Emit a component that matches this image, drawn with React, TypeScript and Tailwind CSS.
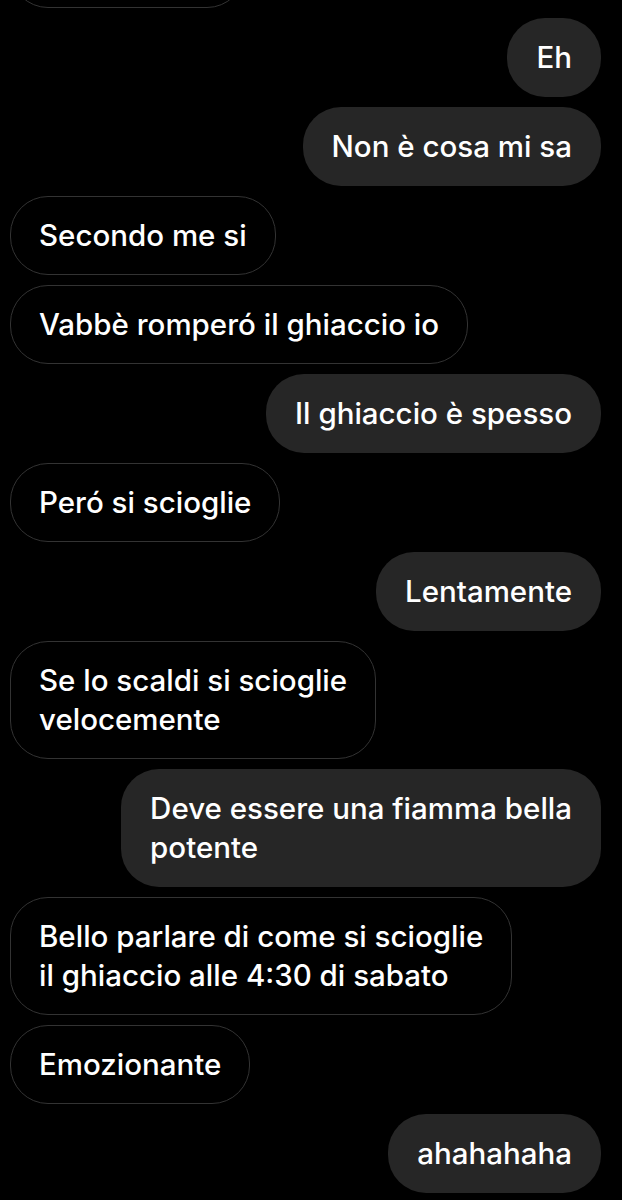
type Message = {
  text: string;
  mine: boolean;
};

const messages: Message[] = [
  { text: "Eh", mine: true },
  { text: "Non è cosa mi sa", mine: true },
  { text: "Secondo me si", mine: false },
  { text: "Vabbè romperó il ghiaccio io", mine: false },
  { text: "Il ghiaccio è spesso", mine: true },
  { text: "Peró si scioglie", mine: false },
  { text: "Lentamente", mine: true },
  { text: "Se lo scaldi si scioglie\nvelocemente", mine: false },
  { text: "Deve essere una fiamma bella\npotente", mine: true },
  { text: "Bello parlare di come si scioglie\nil ghiaccio alle 4:30 di sabato", mine: false },
  { text: "Emozionante", mine: false },
  { text: "ahahahaha", mine: true },
];

const Bubble = ({ text, mine }: Message) => (
  <div
    className={`whitespace-pre-line rounded-[38px] border px-[28px] py-[19px] text-[29.5px] font-medium leading-[39px] text-white ${
      mine
        ? "self-end border-transparent bg-[#262626]"
        : "self-start border-[#333333] bg-black"
    }`}
  >
    {text}
  </div>
);

const App = () => {
  return (
    <div
      className="h-[1200px] w-full overflow-hidden bg-black"
      style={{ fontFamily: "Inter, 'Noto Sans', sans-serif" }}
    >
      <div className="flex flex-col gap-[10px] pl-[10px] pr-[21px]">
        <div className="-mt-[71px] h-[79px] w-[235px] self-start rounded-[38px] border border-[#333333] bg-black"></div>
        {messages.map((m, i) => (
          <Bubble key={i} text={m.text} mine={m.mine} />
        ))}
      </div>
    </div>
  );
};

export default App;
